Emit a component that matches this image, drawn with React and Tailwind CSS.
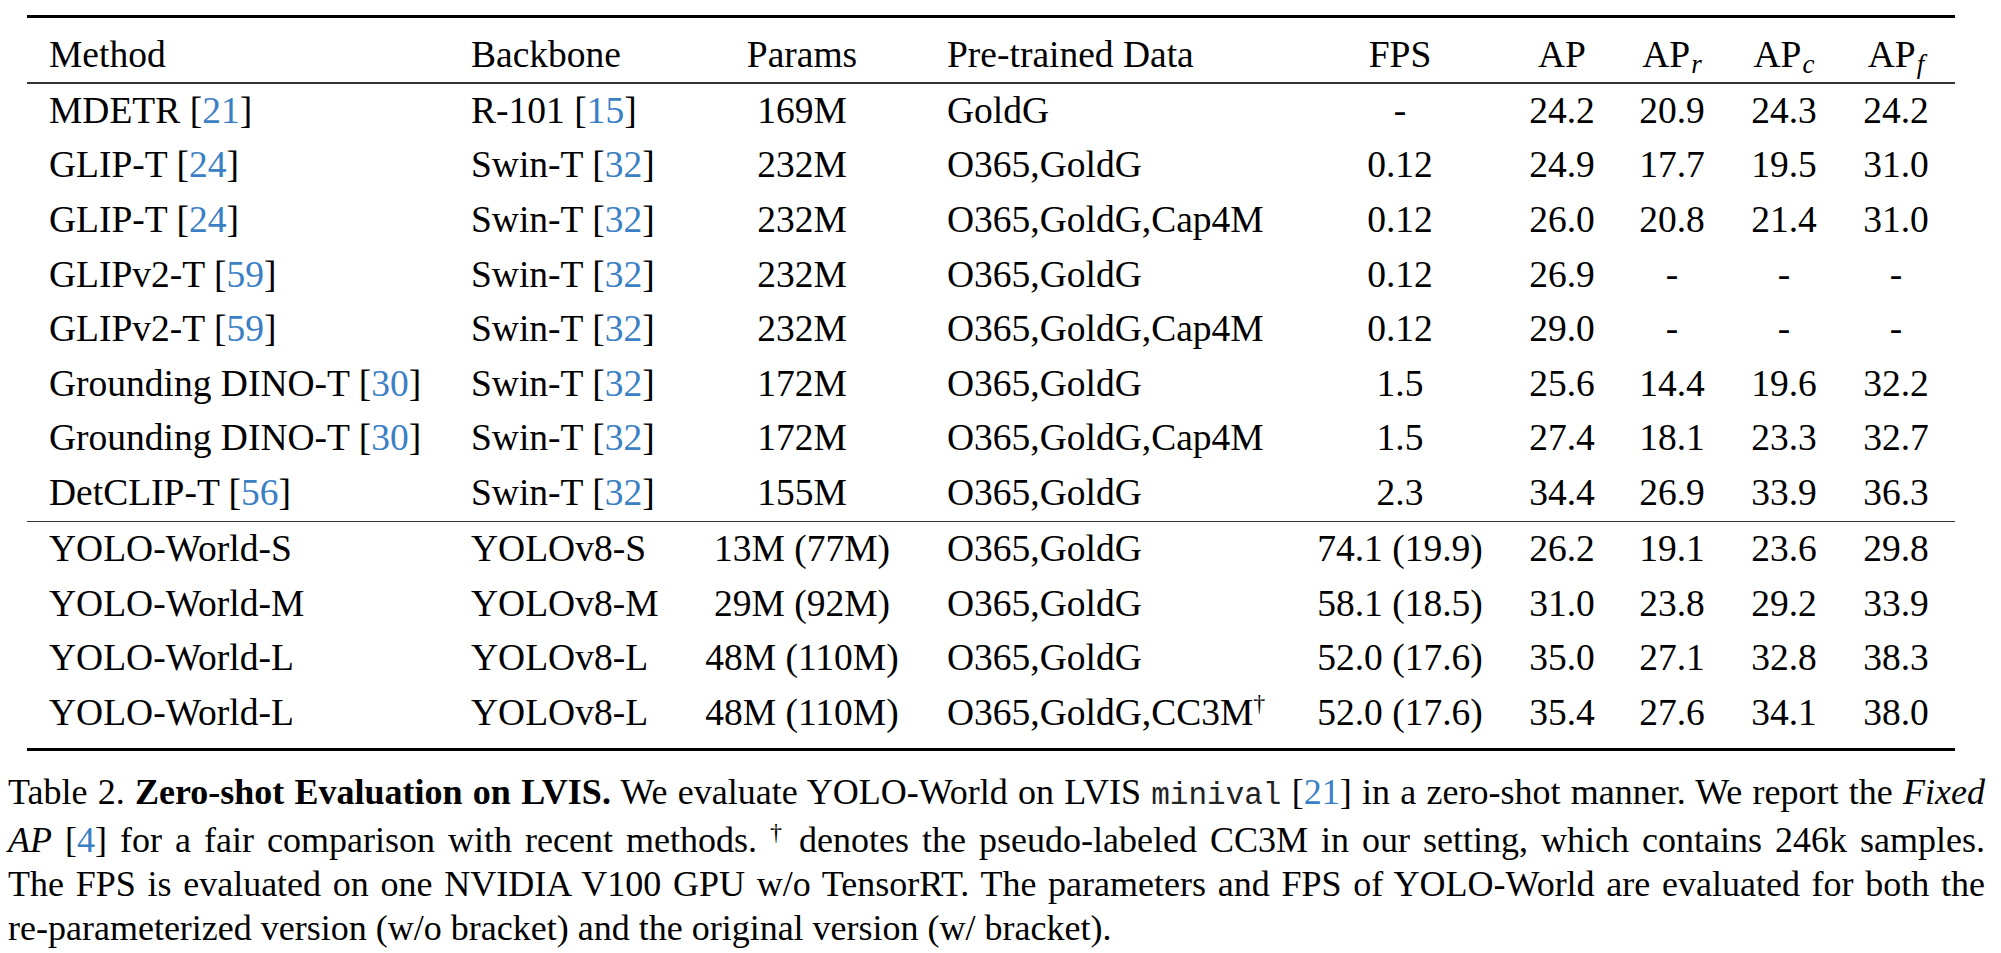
import React from "react";

const cols = "grid grid-cols-[444px_186px_290px_353px_200px_124px_96px_128px_96px]";

const baseRows = [
  { method: "MDETR", mref: "21", backbone: "R-101", bref: "15", params: "169M", data: "GoldG", fps: "-", ap: ["24.2", "20.9", "24.3", "24.2"] },
  { method: "GLIP-T", mref: "24", backbone: "Swin-T", bref: "32", params: "232M", data: "O365,GoldG", fps: "0.12", ap: ["24.9", "17.7", "19.5", "31.0"] },
  { method: "GLIP-T", mref: "24", backbone: "Swin-T", bref: "32", params: "232M", data: "O365,GoldG,Cap4M", fps: "0.12", ap: ["26.0", "20.8", "21.4", "31.0"] },
  { method: "GLIPv2-T", mref: "59", backbone: "Swin-T", bref: "32", params: "232M", data: "O365,GoldG", fps: "0.12", ap: ["26.9", "-", "-", "-"] },
  { method: "GLIPv2-T", mref: "59", backbone: "Swin-T", bref: "32", params: "232M", data: "O365,GoldG,Cap4M", fps: "0.12", ap: ["29.0", "-", "-", "-"] },
  { method: "Grounding DINO-T", mref: "30", backbone: "Swin-T", bref: "32", params: "172M", data: "O365,GoldG", fps: "1.5", ap: ["25.6", "14.4", "19.6", "32.2"] },
  { method: "Grounding DINO-T", mref: "30", backbone: "Swin-T", bref: "32", params: "172M", data: "O365,GoldG,Cap4M", fps: "1.5", ap: ["27.4", "18.1", "23.3", "32.7"] },
  { method: "DetCLIP-T", mref: "56", backbone: "Swin-T", bref: "32", params: "155M", data: "O365,GoldG", fps: "2.3", ap: ["34.4", "26.9", "33.9", "36.3"] },
];

const yoloRows = [
  { method: "YOLO-World-S", backbone: "YOLOv8-S", params: "13M (77M)", data: "O365,GoldG", fps: "74.1 (19.9)", ap: ["26.2", "19.1", "23.6", "29.8"] },
  { method: "YOLO-World-M", backbone: "YOLOv8-M", params: "29M (92M)", data: "O365,GoldG", fps: "58.1 (18.5)", ap: ["31.0", "23.8", "29.2", "33.9"] },
  { method: "YOLO-World-L", backbone: "YOLOv8-L", params: "48M (110M)", data: "O365,GoldG", fps: "52.0 (17.6)", ap: ["35.0", "27.1", "32.8", "38.3"] },
  { method: "YOLO-World-L", backbone: "YOLOv8-L", params: "48M (110M)", data: "O365,GoldG,CC3M", dagger: true, fps: "52.0 (17.6)", ap: ["35.4", "27.6", "34.1", "38.0"] },
];

function Cite({ n }) {
  return (
    <>
      [<span className="text-[#3b7fc4]">{n}</span>]
    </>
  );
}

function Row({ r }) {
  return (
    <div className={`${cols} h-[54.6px] leading-[54.6px] whitespace-nowrap`}>
      <div className="pl-[22px]">
        {r.method}
        {r.mref && (
          <>
            {" "}
            <Cite n={r.mref} />
          </>
        )}
      </div>
      <div>
        {r.backbone}
        {r.bref && (
          <>
            {" "}
            <Cite n={r.bref} />
          </>
        )}
      </div>
      <div className="text-center">{r.params}</div>
      <div>
        {r.data}
        {r.dagger && <sup className="text-[24px] -top-[0.6em]">†</sup>}
      </div>
      <div className="text-center">{r.fps}</div>
      {r.ap.map((v, i) => (
        <div key={i} className="text-center">
          {v}
        </div>
      ))}
    </div>
  );
}

function APHead({ sub }) {
  return (
    <div className="text-center">
      AP
      <span className="italic text-[27px] align-[-6px] pl-[1px]">{sub}</span>
    </div>
  );
}

export default function App() {
  return (
    <div className="w-[2001px] h-[953px] overflow-hidden bg-white text-black font-['Liberation_Serif',serif]">
      <div className="ml-[27px] mt-[15px] w-[1928px] text-[37.5px]">
        <div className="h-[3px] bg-black" />
        <div className={`${cols} pt-[10px] h-[64.4px] leading-[54.6px] whitespace-nowrap`}>
          <div className="pl-[22px]">Method</div>
          <div>Backbone</div>
          <div className="text-center">Params</div>
          <div>Pre-trained Data</div>
          <div className="text-center">FPS</div>
          <div className="text-center">AP</div>
          <APHead sub="r" />
          <APHead sub="c" />
          <APHead sub="f" />
        </div>
        <div className="h-[1.5px] bg-[#333]" />
        {baseRows.map((r, i) => (
          <Row key={i} r={r} />
        ))}
        <div className="h-[1.5px] bg-[#333]" />
        {yoloRows.map((r, i) => (
          <Row key={i} r={r} />
        ))}
        <div className="mt-[7px] h-[3px] bg-black" />
      </div>

      <div className="ml-[8px] mt-[19px] w-[1977px] text-[36px] leading-[44px]">
        <div className="text-justify [text-align-last:justify]">
          Table 2. <b>Zero-shot Evaluation on LVIS.</b> We evaluate YOLO-World on LVIS{" "}
          <span className="font-['Liberation_Mono',monospace] text-[31px] text-[#222]">minival</span>{" "}
          <Cite n="21" /> in a zero-shot manner. We report the <i>Fixed</i>
        </div>
        <div className="text-justify [text-align-last:justify]">
          <i>AP</i> <Cite n="4" /> for a fair comparison with recent methods.{" "}
          <sup className="text-[24px]">†</sup> denotes the pseudo-labeled CC3M in our setting, which contains 246k samples.
        </div>
        <div className="text-justify [text-align-last:justify]">
          The FPS is evaluated on one NVIDIA V100 GPU w/o TensorRT. The parameters and FPS of YOLO-World are evaluated for both the
        </div>
        <div>re-parameterized version (w/o bracket) and the original version (w/ bracket).</div>
      </div>
    </div>
  );
}
